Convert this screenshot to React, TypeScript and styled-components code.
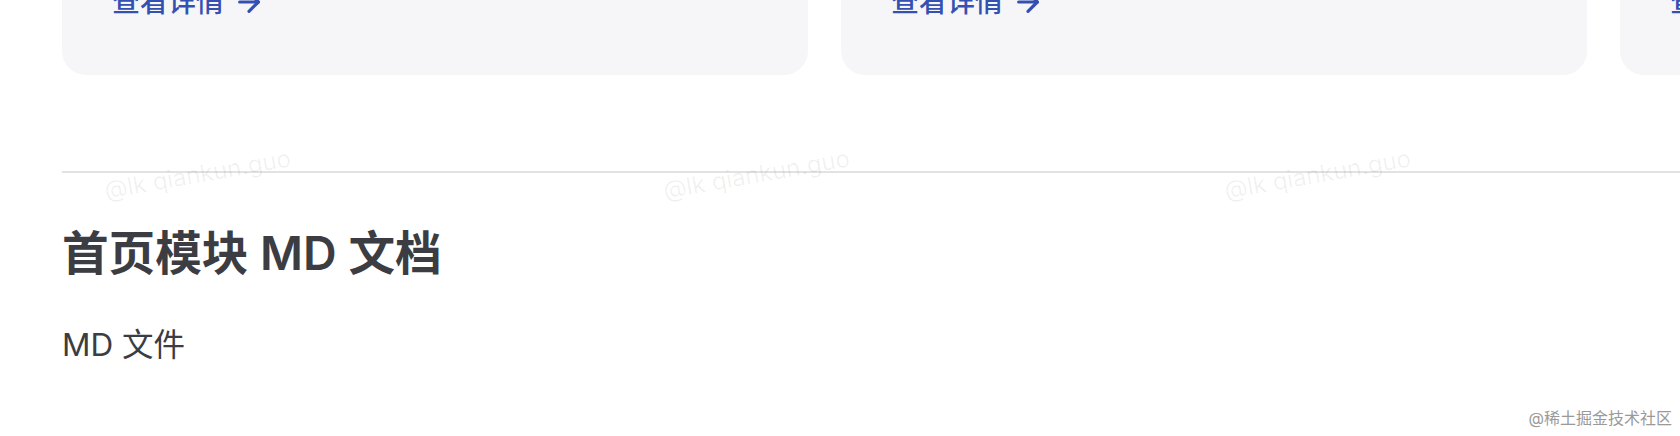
import React from 'react';
import styled, {createGlobalStyle} from 'styled-components';
import {ArrowRight} from 'lucide-react';

const GlobalStyle = createGlobalStyle`
  html, body {
    margin: 0;
    padding: 0;
    background: #ffffff;
    overflow: hidden;
  }

  body {
    font-family: Inter, "Noto Sans CJK SC", "Noto Sans", sans-serif;
    color: #3c3c43;
    -webkit-font-smoothing: antialiased;
  }
`

const Page = styled.div`
  position: relative;
  width: 1680px;
  height: 436px;
  overflow: hidden;
`

const Content = styled.div`
  width: 2302px;
  padding-left: 62px;
`

const Features = styled.div`
  display: grid;
  grid-template-columns: repeat(3, 746px);
  gap: 33px;
  margin-top: -60px;
`

const FeatureCard = styled.div`
  background: #f6f6f8;
  border-radius: 24px;
  padding: 42px 48px 53px 50px;
`

const LinkText = styled.a`
  display: inline-flex;
  align-items: center;
  gap: 9px;
  font-size: 28px;
  line-height: 40px;
  font-weight: 500;
  color: #3451b2;
  text-decoration: none;
`

const Doc = styled.div`
  margin-top: 96px;
`

const Heading = styled.h2`
  margin: 0;
  border-top: 2px solid #e2e2e3;
  padding-top: 48px;
  font-size: 46.6px;
  line-height: 64px;
  font-weight: 600;
  color: #3c3c43;
`

const Paragraph = styled.p`
  margin: 32px 0;
  font-size: 31.5px;
  line-height: 56px;
  color: #3c3c43;
`

const Watermark = styled.span<{ $left: number }>`
  position: absolute;
  top: 176px;
  left: ${p => p.$left}px;
  font-size: 24px;
  color: rgba(0, 0, 0, 0.06);
  transform: rotate(-10deg);
  transform-origin: left bottom;
  white-space: nowrap;
  pointer-events: none;
`

const SiteMark = styled.span`
  position: absolute;
  right: 8px;
  bottom: 8px;
  font-size: 16px;
  line-height: 20px;
  color: #9a9a9a;
  text-shadow: 0 0 2px #fff, 0 0 1px #fff;
  pointer-events: none;
`

const features = ['查看详情', '查看详情', '查看详情'];

const App = () => {
    return (<>
        <GlobalStyle/>
        <Page>
            <Content>
                <Features>
                    {features.map((label, i) => (
                        <FeatureCard key={i}>
                            <LinkText href="#">
                                {label}
                                <ArrowRight size={32} strokeWidth={2.4}/>
                            </LinkText>
                        </FeatureCard>
                    ))}
                </Features>
                <Doc>
                    <Heading>首页模块 MD 文档</Heading>
                    <Paragraph>MD 文件</Paragraph>
                </Doc>
            </Content>
            {[107, 666, 1227].map(left => (
                <Watermark key={left} $left={left}>@lk qiankun.guo</Watermark>
            ))}
            <SiteMark>@稀土掘金技术社区</SiteMark>
        </Page>
    </>);
};

export default App;
